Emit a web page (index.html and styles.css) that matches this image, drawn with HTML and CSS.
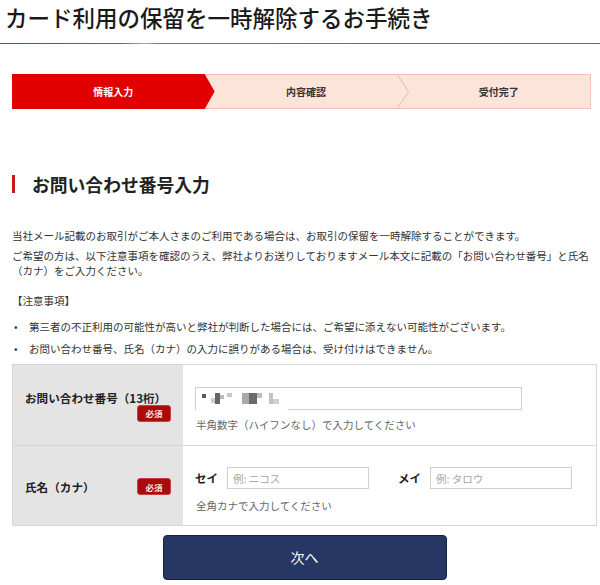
FILE: index.html
```html
<!DOCTYPE html>
<html lang="ja">
<head>
<meta charset="utf-8">
<title>カード利用の保留を一時解除するお手続き</title>
<link rel="stylesheet" href="styles.css">
</head>
<body>
<h1 class="page-title">カード利用の保留を一時解除するお手続き</h1>
<div class="title-rule"></div>

<main class="content">
  <ol class="steps">
    <li class="step active">情報入力</li>
    <li class="step chevron">内容確認
      <svg class="chev" width="14" height="35" viewBox="0 0 14 35"><polyline points="1,0 12.5,17.5 1,35" fill="none" stroke="#efb6aa" stroke-width="1"/></svg>
    </li>
    <li class="step last">受付完了</li>
  </ol>

  <h2 class="section-title">お問い合わせ番号入力</h2>

  <p class="lead">当社メール記載のお取引がご本人さまのご利用である場合は、お取引の保留を一時解除することができます。</p>
  <p class="lead second">ご希望の方は、以下注意事項を確認のうえ、弊社よりお送りしておりますメール本文に記載の「お問い合わせ番号」と氏名（カナ）をご入力ください。</p>

  <p class="notes-title">【注意事項】</p>
  <ul class="notes">
    <li>第三者の不正利用の可能性が高いと弊社が判断した場合には、ご希望に添えない可能性がございます。</li>
    <li>お問い合わせ番号、氏名（カナ）の入力に誤りがある場合は、受け付けはできません。</li>
  </ul>

  <div class="form">
    <div class="label-cell">
      <span class="label-text">お問い合わせ番号（13桁）</span>
      <span class="badge">必須</span>
    </div>
    <div class="field-cell">
      <div class="input-wrap">
        <input class="input number" type="text" aria-label="お問い合わせ番号">
        <div class="mosaic">
          <span class="px" style="left:6px;top:6px;width:4px;height:4px;background:#5a5a5a"></span>
          <span class="px" style="left:19px;top:5px;width:5px;height:11px;background:#666"></span>
          <span class="px" style="left:24px;top:7px;width:4px;height:4px;background:#bbb"></span>
          <span class="px" style="left:15px;top:10px;width:4px;height:5px;background:#ccc"></span>
          <span class="px" style="left:31px;top:5px;width:5px;height:4px;background:#c8c8c8"></span>
          <span class="px" style="left:46px;top:5px;width:7px;height:11px;background:#aaa"></span>
          <span class="px" style="left:53px;top:5px;width:8px;height:11px;background:#6a6a6a"></span>
          <span class="px" style="left:61px;top:5px;width:5px;height:5px;background:#bdbdbd"></span>
          <span class="px" style="left:73px;top:5px;width:4px;height:11px;background:#c2c2c2"></span>
          <span class="px" style="left:77px;top:11px;width:6px;height:5px;background:#d0d0d0"></span>
        </div>
      </div>
      <p class="help">半角数字（ハイフンなし）で入力してください</p>
    </div>

    <div class="label-cell row2">
      <span class="label-text">氏名（カナ）</span>
      <span class="badge">必須</span>
    </div>
    <div class="field-cell row2">
      <div class="name-fields">
        <label class="name-label">セイ</label>
        <input class="input name" type="text" placeholder="例: ニコス">
        <label class="name-label mei">メイ</label>
        <input class="input name" type="text" placeholder="例: タロウ">
      </div>
      <p class="help">全角カナで入力してください</p>
    </div>
  </div>

  <div class="actions">
    <button class="next-btn" type="button">次へ</button>
  </div>
</main>
</body>
</html>
```

FILE: styles.css
```css
* { box-sizing: border-box; }

body {
  margin: 0;
  font-family: "Noto Sans CJK JP", "Noto Sans", sans-serif;
  color: #333;
  background: #fff;
}

.page-title {
  margin: 0;
  padding: 3px 0 0 5px;
  font-size: 22.5px;
  line-height: 29px;
  font-weight: 500;
  color: #1a1a1a;
  letter-spacing: 0;
}

.title-rule {
  margin-top: 11px;
  height: 1px;
  background: linear-gradient(to right, #d22 0, #d33 120px, #c99 145px, #777 160px, #666 100%);
}

.content {
  padding: 0 3px 0 12px;
}

/* steps */
.steps {
  list-style: none;
  margin: 30px 0 0 0;
  padding: 0;
  width: 579px;
  height: 35px;
  display: flex;
}

.step {
  position: relative;
  flex: 1;
  height: 35px;
  display: flex;
  align-items: center;
  justify-content: center;
  padding-left: 10px;
  font-size: 10px;
  font-weight: bold;
  color: #333;
  background: #fce4d9;
  border-top: 1px solid #f2c1b6;
  border-bottom: 1px solid #f2c1b6;
}

.step.active {
  background: #e00000;
  color: #fff;
  border: none;
  z-index: 2;
}

.step.active::after {
  content: "";
  position: absolute;
  top: 0;
  right: -10px;
  width: 10px;
  height: 35px;
  background: #e00000;
  clip-path: polygon(0 0, 100% 50%, 0 100%);
}

.step .chev {
  position: absolute;
  right: -13px;
  top: -1px;
  z-index: 1;
}

.step.last {
  border-right: 1px solid #f2c1b6;
}

/* section heading */
.section-title {
  margin: 66px 0 0 0;
  display: flex;
  align-items: center;
  font-size: 17.8px;
  line-height: 18px;
  font-weight: bold;
  color: #222;
}

.section-title::before {
  content: "";
  display: block;
  width: 3px;
  height: 18px;
  background: #c8161d;
  margin-right: 17px;
}

.lead {
  margin: 35px 0 0 0;
  font-size: 10.5px;
  line-height: 15px;
  color: #333;
}

.lead.second {
  margin-top: 5px;
}

.notes-title {
  margin: 15px 0 0 0;
  font-size: 10.5px;
  line-height: 15px;
}

.notes {
  list-style: none;
  margin: 11px 0 0 0;
  padding: 0 0 0 15px;
  font-size: 10.5px;
  line-height: 15px;
}

.notes li + li {
  margin-top: 7px;
}

.notes li::before {
  content: "•";
  display: inline-block;
  width: 15px;
  margin-left: -15px;
  padding-left: 2px;
}

/* form */
.form {
  margin-top: 7.5px;
  display: grid;
  grid-template-columns: 170px 1fr;
  grid-template-rows: 80px 80px;
  width: 585px;
  border: 1px solid #d6d6d6;
}

.label-cell {
  background: #e4e4e4;
  padding: 3px 12px 0 12px;
  display: flex;
  flex-wrap: wrap;
  align-items: center;
  align-content: center;
}

.label-cell.row2,
.field-cell.row2 {
  border-top: 1px solid #d6d6d6;
}

.label-text {
  font-size: 11.6px;
  line-height: 14px;
  font-weight: bold;
  color: #222;
}

.badge {
  margin-left: auto;
  width: 34px;
  height: 17px;
  display: flex;
  align-items: center;
  justify-content: center;
  background: #a80b0b;
  border: 1px solid #c84040;
  border-radius: 3px;
  color: #fbe4e4;
  font-size: 8.5px;
  font-weight: bold;
}

.field-cell {
  background: #fff;
  padding: 10px 12px 0 12px;
  display: flex;
  flex-direction: column;
  justify-content: center;
}

.input-wrap {
  position: relative;
  width: 327px;
  height: 23px;
}

.input {
  display: block;
  margin: 0;
  border: 1px solid #cfcfcf;
  background: #fff;
  padding: 0 5px;
  font-family: "Noto Sans CJK JP", sans-serif;
  font-size: 10.5px;
  color: #333;
  outline: none;
}

.input::placeholder {
  color: #a5a5a5;
}

.input.number {
  width: 327px;
  height: 23px;
}

.mosaic {
  position: absolute;
  left: 1px;
  top: 1px;
  width: 92px;
  height: 23px;
  background: #fff;
}

.px {
  position: absolute;
  display: block;
}

.help {
  margin: 6.5px 0 0 1px;
  font-size: 10.5px;
  line-height: 15px;
  color: #666;
}

.name-fields {
  display: flex;
  align-items: center;
  height: 22px;
}

.name-label {
  width: 32px;
  font-size: 11.5px;
  font-weight: bold;
  color: #222;
}

.name-label.mei {
  margin-left: 29px;
}

.input.name {
  width: 142px;
  height: 22px;
}

.field-cell.row2 .help {
  margin-top: 8.5px;
}

.actions {
  display: flex;
  justify-content: center;
  width: 585px;
  margin-top: 9px;
}

.next-btn {
  width: 284px;
  height: 45px;
  background: #253762;
  border: 1px solid #18223e;
  border-radius: 4px;
  color: #fff;
  font-family: "Noto Sans CJK JP", sans-serif;
  font-size: 14px;
  cursor: pointer;
}
```
